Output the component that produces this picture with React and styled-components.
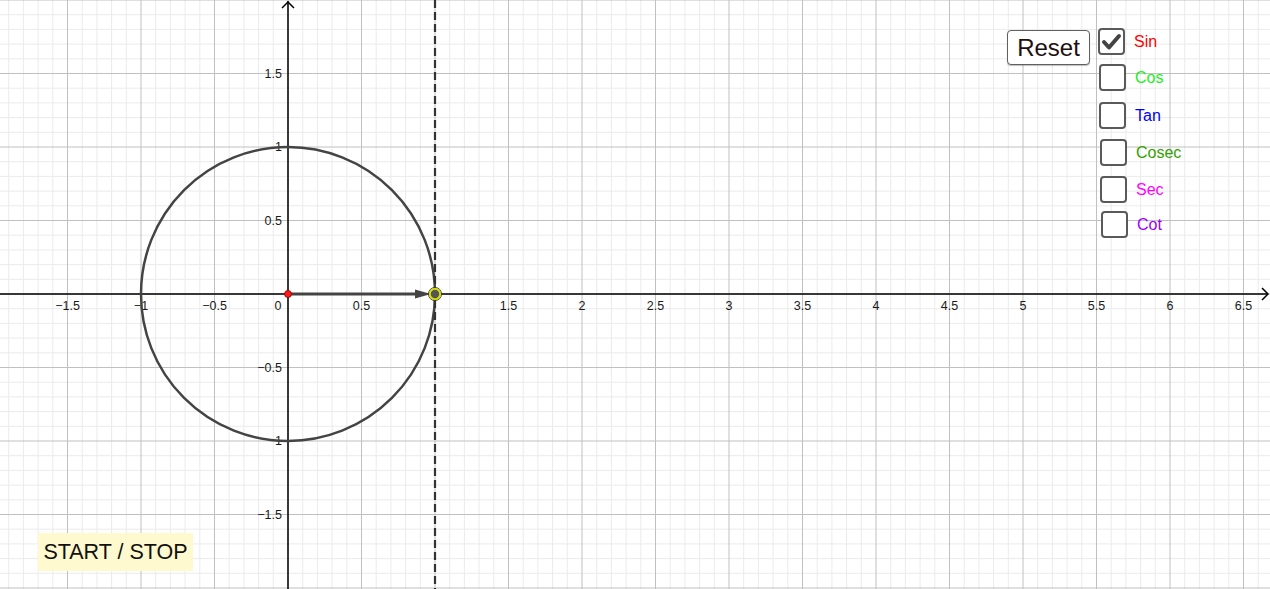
import React from "react";
import styled, { createGlobalStyle } from "styled-components";

const Global = createGlobalStyle`
  html, body { margin: 0; padding: 0; background: #fff; }
  body { font-family: "Liberation Sans", Arial, sans-serif; }
`;

const W = 1270;
const H = 589;
const OX = 288;
const OY = 294;
const U = 147;

const Canvas = styled.div`
  position: relative;
  width: ${W}px;
  height: ${H}px;
  overflow: hidden;
  background: #fff;
`;

const Board = styled.svg`
  position: absolute;
  inset: 0;
  display: block;
`;

const ResetButton = styled.button`
  position: absolute;
  left: 1007px;
  top: 30px;
  width: 83px;
  height: 35px;
  box-sizing: border-box;
  padding: 0;
  border: 1px solid #606060;
  border-radius: 4px;
  background: #fff;
  box-shadow: 0 1px 1px rgba(0, 0, 0, 0.25);
  color: #201010;
  font-family: "Liberation Sans", Arial, sans-serif;
  font-size: 24px;
  line-height: 33px;
  text-align: center;
  cursor: pointer;
`;

const CheckRow = styled.label`
  position: absolute;
  display: flex;
  align-items: center;
  gap: 9px;
  cursor: pointer;
`;

const Box = styled.span`
  width: 27px;
  height: 27px;
  box-sizing: border-box;
  border: 2px solid #5a5a5a;
  border-radius: 4px;
  background: #fff;
  display: flex;
  align-items: center;
  justify-content: center;
`;

const CheckLabel = styled.span`
  font-family: "Liberation Sans", Arial, sans-serif;
  font-size: 16px;
  color: ${(p) => p.$color};
`;

const StartStop = styled.button`
  position: absolute;
  left: 38px;
  top: 533px;
  width: 155px;
  height: 38px;
  border: none;
  padding: 0;
  background: #fff9cf;
  color: #111;
  font-family: "Liberation Sans", Arial, sans-serif;
  font-size: 21.5px;
  text-align: center;
  cursor: pointer;
`;

const checks = [
  { name: "Sin", color: "#ff0000", x: 1098, y: 28, checked: true },
  { name: "Cos", color: "#22ee22", x: 1099, y: 64 },
  { name: "Tan", color: "#0000ff", x: 1099, y: 102 },
  { name: "Cosec", color: "#33a000", x: 1100, y: 139 },
  { name: "Sec", color: "#ff00ff", x: 1100, y: 176 },
  { name: "Cot", color: "#9900ff", x: 1101, y: 211 },
];

const fmt = (v) => {
  const s = String(Math.abs(v));
  return v < 0 ? "\u2212" + s : s;
};

function Grid() {
  const minor = [];
  const major = [];
  const step = U / 10;
  for (let k = -30; k <= 80; k++) {
    const x = OX + k * step;
    if (x < -1 || x > W + 1) continue;
    (k % 5 === 0 ? major : minor).push(
      <line key={"x" + k} x1={x} y1={0} x2={x} y2={H} />
    );
  }
  for (let k = -30; k <= 30; k++) {
    const y = OY + k * step;
    if (y < -1 || y > H + 1) continue;
    (k % 5 === 0 ? major : minor).push(
      <line key={"y" + k} x1={0} y1={y} x2={W} y2={y} />
    );
  }
  return (
    <>
      <g stroke="#ebebeb" strokeWidth="1">{minor}</g>
      <g stroke="#c0c0c0" strokeWidth="1">{major}</g>
    </>
  );
}

function Labels() {
  const xs = [];
  for (let v = -1.5; v <= 6.5; v += 0.5) {
    if (v === 0 || v === 1) continue;
    xs.push(
      <text key={"lx" + v} x={OX + v * U} y={310} textAnchor="middle">
        {fmt(v)}
      </text>
    );
  }
  const ys = [];
  for (let v = -1.5; v <= 1.5; v += 0.5) {
    if (v === 0) continue;
    ys.push(
      <text key={"ly" + v} x={282} y={OY - v * U + 4} textAnchor="end">
        {fmt(v)}
      </text>
    );
  }
  return (
    <g fontFamily="'Liberation Sans', Arial, sans-serif" fontSize="12.5" fill="#1a1a1a">
      {xs}
      {ys}
      <text x={278} y={310} textAnchor="middle">0</text>
    </g>
  );
}

export default function App() {
  return (
    <>
      <Global />
      <Canvas>
        <Board width={W} height={H} viewBox={`0 0 ${W} ${H}`}>
          <Grid />
          {/* axes */}
          <g stroke="#000" strokeWidth="1.5" fill="none">
            <line x1={0} y1={OY} x2={W - 2} y2={OY} />
            <line x1={OX} y1={H} x2={OX} y2={1} />
            <polyline points={`${W - 8},${OY - 6} ${W - 2},${OY} ${W - 8},${OY + 6}`} />
            <polyline points={`${OX - 6},${8} ${OX},${2} ${OX + 6},${8}`} />
          </g>
          <Labels />
          {/* unit circle */}
          <circle cx={OX} cy={OY} r={U} fill="none" stroke="#444" strokeWidth="2.5" />
          {/* dashed line x = 1 */}
          <line
            x1={OX + U}
            y1={0}
            x2={OX + U}
            y2={H}
            stroke="#333"
            strokeWidth="2.2"
            strokeDasharray="8 4"
          />
          {/* vector */}
          <line x1={OX} y1={OY} x2={OX + U - 16} y2={OY} stroke="#444" strokeWidth="3" />
          <polygon
            points={`${OX + U - 20},${OY - 4.5} ${OX + U - 4},${OY} ${OX + U - 20},${OY + 4.5}`}
            fill="#444"
          />
          {/* points */}
          <circle cx={OX} cy={OY} r={3.5} fill="#ff1a1a" stroke="#8a0000" strokeWidth="0.8" />
          <circle cx={OX + U} cy={OY} r={5.2} fill="#555" stroke="#d8e000" strokeWidth="2" />
          <circle cx={OX + U} cy={OY} r={6.6} fill="none" stroke="#333" strokeWidth="0.8" />
        </Board>

        <ResetButton type="button">Reset</ResetButton>

        {checks.map((c) => (
          <CheckRow key={c.name} style={{ left: c.x, top: c.y }}>
            <Box>
              {c.checked && (
                <svg width="21" height="18" viewBox="0 0 21 18">
                  <polyline
                    points="3,9 8,14.5 18,3"
                    fill="none"
                    stroke="#444"
                    strokeWidth="4"
                    strokeLinecap="round"
                    strokeLinejoin="round"
                  />
                </svg>
              )}
            </Box>
            <CheckLabel $color={c.color}>{c.name}</CheckLabel>
          </CheckRow>
        ))}

        <StartStop type="button">START / STOP</StartStop>
      </Canvas>
    </>
  );
}
